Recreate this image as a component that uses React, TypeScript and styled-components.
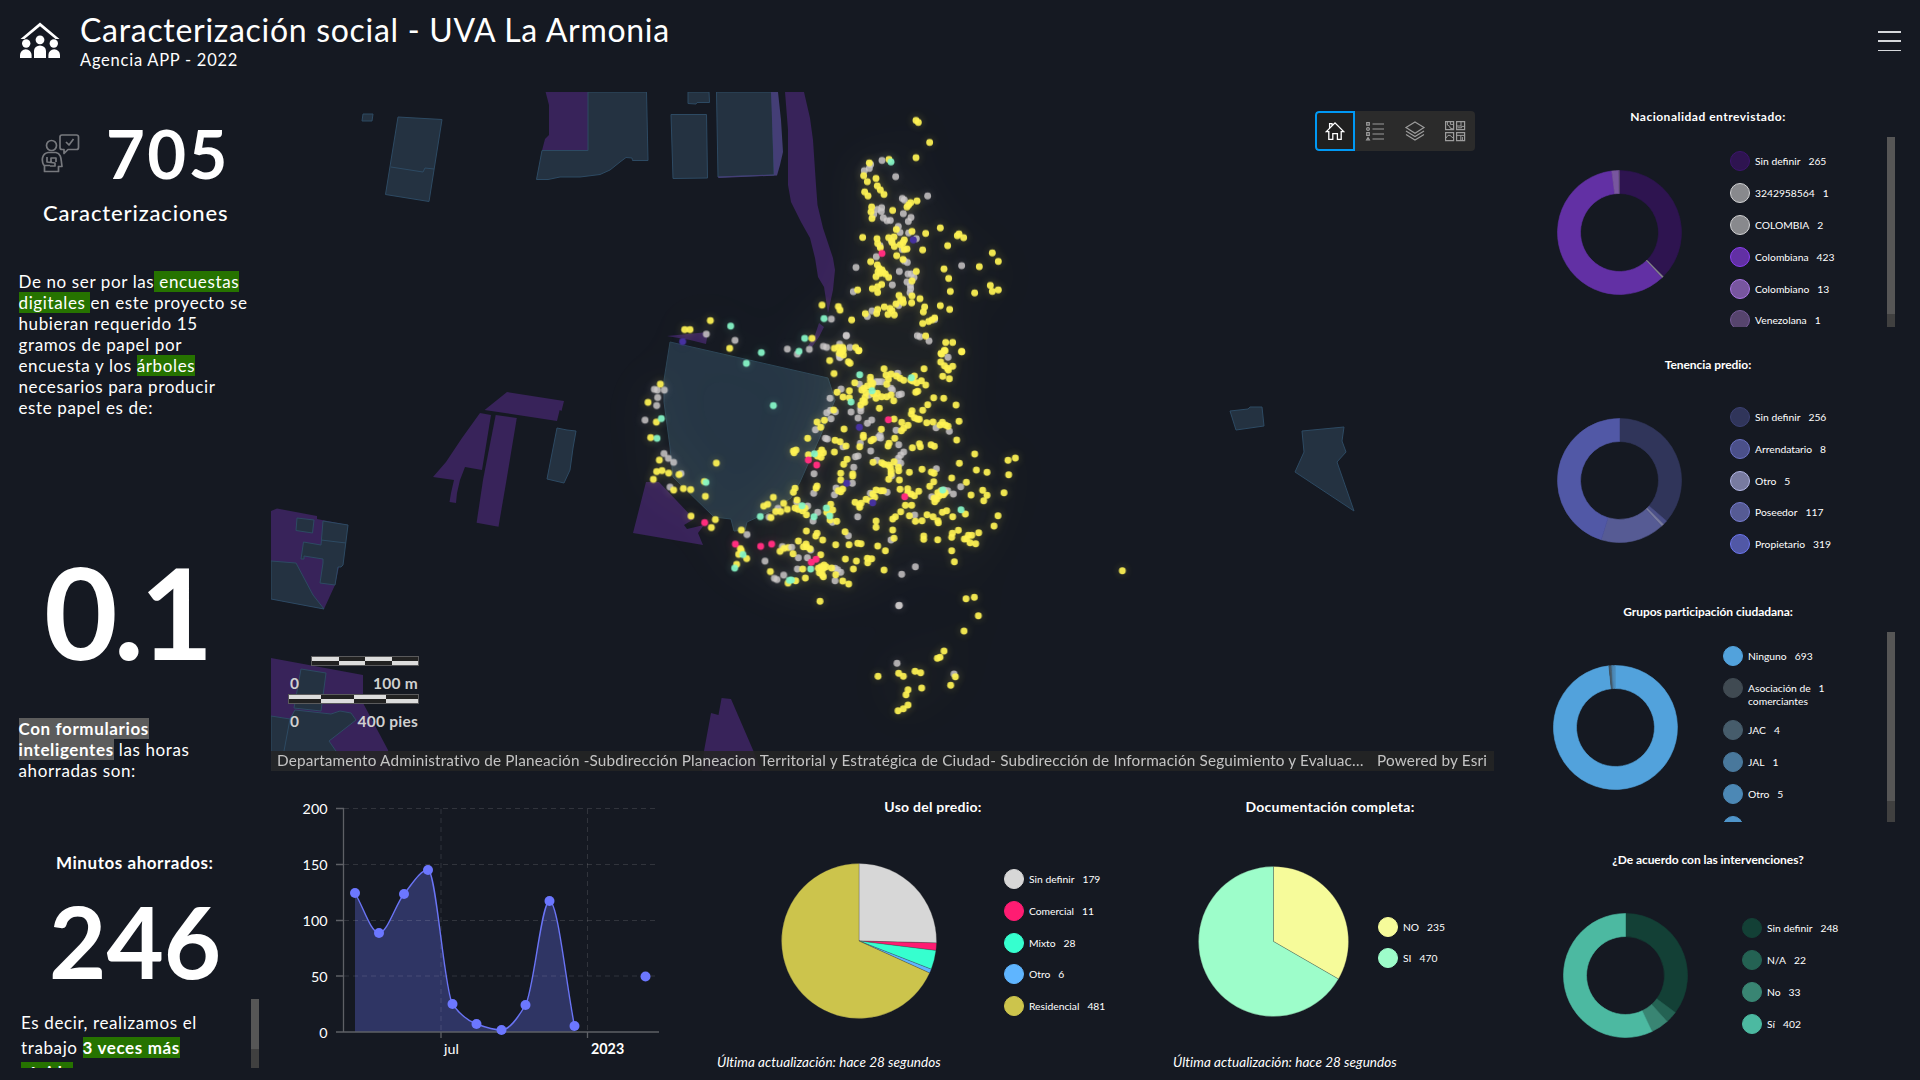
import React from "react";
import styled, { createGlobalStyle } from "styled-components";

const GlobalStyle = createGlobalStyle`
  * { box-sizing: border-box; }
  body { margin: 0; background: #151922; overflow: hidden; }
`;

const Page = styled.div`
  width: 1920px;
  height: 1080px;
  display: flex;
  flex-direction: column;
  overflow: hidden;
  background: #151922;
  color: #fff;
  font-family: Lato, "Open Sans", sans-serif;
`;

const Header = styled.header`
  height: 92px;
  flex: none;
  display: flex;
  align-items: flex-start;
  padding: 0 19px 0 20px;
`;
const HeaderIcon = styled.svg`
  margin-top: 21px;
  width: 40px;
  height: 38px;
`;
const Titles = styled.div`
  margin-left: 20px;
  flex: 1;
  padding-top: 10px;
`;
const Title = styled.h1`
  margin: 0;
  font-size: 32px;
  line-height: 40px;
  font-weight: 400;
  letter-spacing: 0.7px;
`;
const Subtitle = styled.div`
  font-size: 16.5px;
  line-height: 20px;
  letter-spacing: 0.75px;
`;
const MenuIcon = styled.div`
  margin-top: 31px;
  width: 23px;
  height: 20px;
  display: flex;
  flex-direction: column;
  justify-content: space-between;
  &::before, &::after, & > i { content: ""; height: 1.5px; background: #d6d8dc; display: block; }
`;

const Body = styled.main`
  display: flex;
  height: 988px;
`;
const LeftColumn = styled.aside`
  width: 271px;
  flex: none;
  display: flex;
  flex-direction: column;
`;
const CenterColumn = styled.section`
  width: 1223px;
  flex: none;
  display: flex;
  flex-direction: column;
`;
const RightColumn = styled.aside`
  width: 426px;
  flex: none;
  display: flex;
  flex-direction: column;
`;

const CountRow = styled.div`
  margin-top: 27px;
  height: 68px;
  display: flex;
  align-items: center;
  padding-left: 41px;
`;
const PersonIcon = styled.svg`
  width: 39px;
  height: 40px;
  margin-right: 26px;
`;
const BigNumber = styled.div<{ $size: number; $top?: number; $spacing?: number; $left?: number; $line?: number }>`
  margin-top: ${(p) => p.$top ?? 0}px;
  padding-left: ${(p) => p.$left ?? 0}px;
  font-size: ${(p) => p.$size}px;
  line-height: ${(p) => p.$line ?? p.$size}px;
  font-weight: 700;
  letter-spacing: ${(p) => p.$spacing ?? 0}px;
  white-space: nowrap;
`;
const CountLabel = styled.div`
  margin-top: 13px;
  width: 271px;
  line-height: 26px;
  font-size: 22px;
  font-weight: 500;
  padding-left: 43px;
  letter-spacing: 0.85px;
`;
const Prose = styled.p<{ $top: number; $line?: number; $left?: number }>`
  margin: ${(p) => p.$top}px 0 0;
  padding-left: ${(p) => p.$left ?? 18.5}px;
  font-size: 17px;
  line-height: ${(p) => p.$line ?? 21}px;
  letter-spacing: 0.62px;
  white-space: nowrap;
`;
const Mark = styled.mark<{ $tone: "green" | "gray" }>`
  color: inherit;
  background: ${(p) => (p.$tone === "green" ? "#267300" : "#5c5c5c")};
  font-weight: ${(p) => (p.$tone === "gray" ? 700 : "inherit")};
  padding: 0;
  display: inline-block;
  line-height: 21px;
  white-space: pre;
`;
const MinutesLabel = styled.div`
  margin-top: 72px;
  line-height: 20px;
  font-size: 17px;
  font-weight: 700;
  padding-left: 56px;
  letter-spacing: 0.55px;
  white-space: nowrap;
`;
const ScrollBox = styled.div`
  margin-top: 8px;
  height: 69px;
  display: flex;
  overflow: hidden;
`;
const ScrollText = styled.div`
  width: 251px;
`;
const ScrollTrack = styled.div<{ $height: number; $thumb: number }>`
  width: 8px;
  height: ${(p) => p.$height}px;
  background: #404040;
  &::before { content: ""; display: block; height: ${(p) => p.$thumb}px; background: #565656; }
`;

const MapFrame = styled.div`
  position: relative;
  height: 679px;
  overflow: hidden;
`;
const MapCanvas = styled.svg`
  display: block;
  width: 1223px;
  height: 679px;
`;
const Toolbar = styled.div`
  position: absolute;
  left: 1044px;
  top: 19px;
  display: flex;
  border-radius: 4px;
  overflow: hidden;
  background: #2b2b2b;
`;
const Tool = styled.button<{ $active?: boolean }>`
  width: 40px;
  height: 40px;
  padding: 0;
  display: grid;
  place-items: center;
  color: ${(p) => (p.$active ? "#fff" : "#9c9c9c")};
  background: ${(p) => (p.$active ? "#202020" : "transparent")};
  border: ${(p) => (p.$active ? "2px solid #0099f5" : "0")};
  border-radius: ${(p) => (p.$active ? "4px 0 0 4px" : "0")};
`;
const ScaleBox = styled.div`
  position: absolute;
  left: 17px;
  top: 564px;
  width: 131px;
  display: flex;
  flex-direction: column;
  align-items: flex-end;
`;
const ScaleBar = styled.div<{ $width: number }>`
  width: ${(p) => p.$width}px;
  height: 10px;
  border: 1px solid #5a5a5c;
  display: grid;
  grid-template-columns: repeat(4, 1fr);
`;
const ScaleCell = styled.div<{ $flip: boolean }>`
  background: ${(p) => (p.$flip ? "linear-gradient(#222 50%, #dcdcdc 50%)" : "linear-gradient(#dcdcdc 50%, #222 50%)")};
`;
const ScaleLabels = styled.div`
  width: 131px;
  height: 28px;
  padding: 7px 1px 0 2px;
  display: flex;
  justify-content: space-between;
  line-height: 20px;
  font-size: 15.5px;
  font-weight: 700;
  letter-spacing: 0.25px;
  color: #d0d0d0;
`;
const Attribution = styled.div`
  position: absolute;
  left: 0;
  right: 0;
  bottom: 0;
  height: 20px;
  padding: 0 7px 0 6px;
  display: flex;
  justify-content: space-between;
  background: rgba(36, 36, 36, 0.88);
  color: #c4c4c4;
  font-size: 15.3px;
  line-height: 19px;
  letter-spacing: 0.16px;
  white-space: nowrap;
`;

const BottomRow = styled.div`
  display: flex;
  height: 309px;
`;
const LineSvg = styled.svg`
  width: 434px;
  height: 309px;
  flex: none;
`;
const PiePanel = styled.section<{ $width: number }>`
  width: ${(p) => p.$width}px;
  flex: none;
  padding-top: 26px;
`;
const PanelTitle = styled.h2<{ $small?: boolean; $spacing?: number }>`
  margin: 0;
  text-align: center;
  line-height: 20px;
  font-weight: 700;
  font-size: ${(p) => (p.$small ? 12 : 14)}px;
  letter-spacing: ${(p) => p.$spacing ?? (p.$small ? -0.05 : 0.25)}px;
  white-space: nowrap;
`;
const PieSvg = styled.svg`
  flex: none;
`;
const PieRow = styled.div<{ $left: number; $gap: number }>`
  height: 236px;
  display: flex;
  align-items: center;
  gap: ${(p) => p.$gap}px;
  padding: 15px 0 0 ${(p) => p.$left}px;
  & > ${PieSvg} { margin-bottom: 3px; }
`;
const Updated = styled.div`
  padding-left: 12px;
  line-height: 19px;
  font-size: 13.5px;
  font-style: italic;
  letter-spacing: 0.05px;
`;
const DonutPanel = styled.section`
  height: 247.6px;
  flex: none;
  padding-top: 15px;
`;
const DonutTitle = styled(PanelTitle)`
  padding-left: 2px;
`;
const DonutBody = styled.div<{ $left: number; $gap: number; $top: number }>`
  margin-top: ${(p) => p.$top}px;
  height: 190px;
  overflow: hidden;
  display: flex;
  align-items: center;
  padding: 0 25px 0 ${(p) => p.$left}px;
  gap: ${(p) => p.$gap}px;
  & > ${ScrollTrack} { margin-left: auto; }
`;
const LegendList = styled.ul<{ $scroll?: boolean }>`
  list-style: none;
  margin: 0;
  padding: ${(p) => (p.$scroll ? "14px 0 0" : "0")};
  align-self: ${(p) => (p.$scroll ? "flex-start" : "center")};
  display: flex;
  flex-direction: column;
  gap: 11.9px;
`;
const LegendItem = styled.li`
  min-height: 20px;
  display: flex;
  font-size: 10.3px;
  line-height: 13px;
  white-space: pre-line;
`;
const Swatch = styled.i<{ $fill: string; $edge: string }>`
  width: 20px;
  height: 20px;
  flex: none;
  border-radius: 50%;
  background: ${(p) => p.$fill};
  border: 1px solid ${(p) => p.$edge};
`;
const LegendLabel = styled.span`
  margin: 4px 8px 0 5px;
`;
const LegendValue = styled.span`
  margin-top: 4px;
`;

type Slice = { label: string; value?: number; share?: number; fill: string; edge?: string };

function arc(cx: number, cy: number, r: number, inner: number, a0: number, a1: number) {
  const p = (rad: number, a: number) => `${(cx + rad * Math.sin(a)).toFixed(2)} ${(cy - rad * Math.cos(a)).toFixed(2)}`;
  const large = a1 - a0 > Math.PI ? 1 : 0;
  const start = inner ? `M${p(inner, a0)}L${p(r, a0)}` : `M${cx} ${cy}L${p(r, a0)}`;
  const outer = `A${r} ${r} 0 ${large} 1 ${p(r, a1)}`;
  return inner ? `${start}${outer}L${p(inner, a1)}A${inner} ${inner} 0 ${large} 0 ${p(inner, a0)}Z` : `${start}${outer}Z`;
}

const amount = (d: Slice) => d.value ?? d.share ?? 0;

function Pie({ data, r, inner = 0 }: { data: Slice[]; r: number; inner?: number }) {
  const total = data.reduce((s, d) => s + amount(d), 0);
  const size = r * 2 + 1;
  let angle = 0;
  return (
    <PieSvg width={size} height={size}>
      {data.map((d) => {
        const a0 = angle;
        angle += (amount(d) / total) * Math.PI * 2;
        return <path key={d.label} d={arc(size / 2, size / 2, r, inner, a0, angle)} fill={d.fill} stroke={inner ? d.fill : "rgba(60,60,60,.45)"} strokeWidth={0.6} />;
      })}
    </PieSvg>
  );
}

function Legend({ data, scroll }: { data: Slice[]; scroll?: boolean }) {
  return (
    <LegendList $scroll={scroll}>
      {data.map((d) => (
        <LegendItem key={d.label}>
          <Swatch $fill={d.fill} $edge={d.edge ?? d.fill} />
          <LegendLabel>{d.label}</LegendLabel>
          <LegendValue>{d.value}</LegendValue>
        </LegendItem>
      ))}
    </LegendList>
  );
}

const nationality: Slice[] = [
  { label: "Sin definir", value: 265, fill: "#2e1450", edge: "#3c156d" },
  { label: "3242958564", value: 1, fill: "#88898d", edge: "#d2d2d4" },
  { label: "COLOMBIA", value: 2, fill: "#88898d", edge: "#d2d2d4" },
  { label: "Colombiana", value: 423, fill: "#6230a4", edge: "#8a3ff0" },
  { label: "Colombiano", value: 13, fill: "#78569f", edge: "#ab76e6" },
  { label: "Venezolana", value: 1, fill: "#56446d", edge: "#765b98" },
];
const tenure: Slice[] = [
  { label: "Sin definir", value: 256, fill: "#30355a", edge: "#3c4173" },
  { label: "Arrendatario", value: 8, fill: "#4b5089", edge: "#6b72c4" },
  { label: "Otro", value: 5, fill: "#787ba0", edge: "#b3b7e6" },
  { label: "Poseedor", value: 117, fill: "#565b94", edge: "#767cd0" },
  { label: "Propietario", value: 319, fill: "#5158a6", edge: "#6c76f0" },
];
const groups: Slice[] = [
  { label: "Ninguno", value: 693, fill: "#52a2dc" },
  { label: "Asociación de\ncomerciantes", value: 1, fill: "#404a52" },
  { label: "JAC", value: 4, fill: "#465c6b" },
  { label: "JAL", value: 1, fill: "#49789c" },
  { label: "Otro", value: 5, fill: "#4c88b5" },
  { label: "", share: 1, fill: "#4f95ca" },
];
const agreement: Slice[] = [
  { label: "Sin definir", value: 248, fill: "#134036" },
  { label: "N/A", value: 22, fill: "#246253" },
  { label: "No", value: 33, fill: "#398573" },
  { label: "Sí", value: 402, fill: "#4cb9a1" },
];
const landUse: Slice[] = [
  { label: "Sin definir", value: 179, fill: "#d7d7d7" },
  { label: "Comercial", value: 11, fill: "#ff1c72" },
  { label: "Mixto", value: 28, fill: "#36ffcf" },
  { label: "Otro", value: 6, fill: "#5fb5ff" },
  { label: "Residencial", value: 481, fill: "#ccc44c" },
];
const documents: Slice[] = [
  { label: "NO", value: 235, fill: "#f6fb9a" },
  { label: "SI", value: 470, fill: "#9dfdca" },
];

function Donut({ title, data, left, gap, thumb, spacing }: { title: string; data: Slice[]; left: number; gap: number; thumb?: number; spacing?: number }) {
  return (
    <DonutPanel>
      <DonutTitle $small $spacing={spacing}>{title}</DonutTitle>
      <DonutBody $left={left} $gap={gap} $top={thumb ? 10 : 11}>
        <Pie data={data} r={62} inner={39} />
        <Legend data={data} scroll={!!thumb} />
        {thumb ? <ScrollTrack $height={190} $thumb={thumb} /> : null}
      </DonutBody>
    </DonutPanel>
  );
}

/* Survey points per map tile: tile origin in screen units, coordinates in thirds of a unit. */
type Kind = "yellow" | "gray" | "green" | "pink" | "blue";
const tiles: { x: number; y: number; points: Partial<Record<Kind, string>> }[] = [
  {
    x: 600,
    y: 300,
    points: {
      gray: "694,57 739,107 319,102 405,121 562,147 592,162 628,148 670,139 680,142 719,132 719,172 163,268 172,270 193,270 173,293 170,317 135,360 192,461 205,475 221,487 243,521 210,561 441,704 534,625 507,651 547,740 495,783 551,825 523,835 531,839",
      yellow: "666,15 715,20 720,30 331,62 254,89 270,89 389,145 636,115 181,252 144,307 169,366 152,413 178,480 170,515 186,512 206,519 237,524 160,538 349,489 313,545 221,570 250,566 272,569 316,589 273,648 346,659 334,683 424,690 421,746 416,763 424,752 440,776 410,793 520,592 491,618 503,613 551,610 527,635 542,635 562,628 513,653 540,754 565,743 552,745 511,815 564,849 703,145 715,142 722,155 730,150 689,182 702,221",
      green: "672,56 392,78 614,115 597,154 484,158 439,190 520,317 184,356 171,415 318,547 481,650 429,764 404,804 568,841",
      pink: "314,668 406,732 482,739 515,732",
      blue: "248,125",
    },
  },
  {
    x: 840,
    y: 90,
    points: {
      gray: "126,211 92,223 88,235 73,242 167,260 263,318 187,325 193,330 190,371 125,353 112,358 124,364 101,373 130,384 141,392 151,391 213,382 205,394 175,409 180,427 206,429 229,446 109,500 120,467 154,452 187,478 193,513 202,517 48,532 365,527 178,544 204,552 214,552 222,562 201,576 157,585 211,586 212,596 210,608 40,605 96,663 82,679 176,646 284,688 232,737 240,740 267,753 19,737 30,772",
      yellow: "228,91 235,97 269,157 228,203 147,208 88,219 71,257 82,275 108,265 112,288 121,300 132,313 74,306 84,318 231,333 212,338 206,345 201,351 95,351 93,366 96,385 158,361 169,418 216,424 257,430 301,414 68,442 111,446 113,460 121,473 146,443 162,441 156,457 163,469 193,450 189,458 181,464 201,477 193,478 323,467 352,437 357,432 371,443 248,480 457,489 475,514 418,530 170,497 189,508 92,515 112,525 118,535 126,540 120,550 108,560 136,552 146,562 130,548 114,545 97,596 113,590 125,583 113,607 53,600 229,544 216,573 312,537 326,565 331,604 404,609 451,586 457,604 475,600 177,616 188,628 190,638 168,642 182,632 216,618 240,626 215,639 254,651 250,666 301,647 329,658 113,658 110,670 76,671 133,651 150,655 156,662 144,673 163,675 35,690 248,700 266,694 276,690 284,684 257,738 317,757 338,757 365,784 303,790 313,781 8,772 47,772 57,781",
      green: "153,216",
      pink: "126,490",
      blue: "220,450",
    },
  },
  {
    x: 790,
    y: 350,
    points: {
      gray: "150,22 148,15 474,22 153,117 120,145 323,70 275,95 258,95 266,95 208,103 307,120 326,134 334,132 303,115 237,135 183,186 212,175 212,183 204,204 121,181 110,188 136,185 123,206 76,239 232,220 245,210 318,241 438,233 478,244 106,265 112,267 270,256 265,262 272,264 326,284 242,303 211,280 159,290 196,320 204,318 191,352 260,331 332,315 341,306 325,325 332,340 322,340 439,356 305,377 187,400 138,414 133,434 72,371 71,430 241,430 291,427 512,410 490,432 425,440 473,422 462,420 20,455 53,468 83,487 69,513 127,517 203,500 374,495 303,570 175,557 376,650 335,673 326,767 5,592 62,600 25,623 52,623 22,657 143,659 152,667 135,692 135,655",
      yellow: "148,10 160,15 155,5 175,35 180,40 205,2 515,5 465,2 455,12 452,36 463,47 475,60 488,49 472,55 458,79 478,86 282,56 402,56 288,75 303,72 319,78 330,85 341,91 194,98 241,82 241,92 248,100 232,108 222,115 215,120 245,108 295,88 290,103 362,90 373,78 368,93 380,98 394,92 407,105 377,127 383,124 141,127 178,122 159,141 178,143 228,128 250,132 262,130 258,145 225,142 218,152 224,157 212,165 275,140 290,140 303,135 311,152 268,175 431,143 461,145 498,165 413,164 398,181 366,182 364,192 373,203 382,207 388,208 410,218 429,216 450,225 457,217 466,225 474,229 507,214 500,270 131,180 103,211 81,216 92,232 312,207 335,217 354,226 334,242 341,235 274,238 162,237 220,256 220,262 243,272 250,268 53,265 10,303 18,300 12,308 135,271 150,275 168,288 209,290 133,306 314,265 297,280 294,288 367,293 388,281 391,290 423,284 433,289 95,300 100,308 82,318 93,322 88,310 55,314 171,328 161,343 249,337 275,338 282,343 508,340 554,312 676,324 654,331 656,374 559,360 591,367 358,367 396,358 424,366 432,370 325,352 326,362 312,335 295,345 301,352 303,362 303,372 296,388 328,390 152,370 152,390 188,372 188,378 431,395 485,384 419,409 529,397 578,421 642,428 591,436 581,452 543,435 330,418 353,416 386,424 373,437 363,432 353,428 346,466 365,466 81,408 78,414 15,415 10,427 158,417 145,422 152,425 258,420 272,422 280,422 248,432 254,442 228,448 241,452 195,457 208,465 213,460 209,472 443,428 453,422 465,428 460,434 447,438 432,445 434,455 440,448 21,450 33,470 45,475 15,474 24,478 37,482 49,494 122,463 128,480 110,487 119,495 120,510 140,514 332,485 358,497 411,494 429,500 457,487 470,482 488,500 443,512 445,518 396,512 376,514 316,500 308,507 526,492 624,497 612,528 258,513 258,532 308,540 312,565 49,543 81,550 77,558 98,570 25,573 165,545 401,558 401,568 443,569 505,541 487,550 485,562 535,556 545,556 523,567 530,566 566,548 540,578 557,581 485,602 493,635 263,588 286,602 282,660 137,584 177,584 203,580 213,581 166,627 199,633 190,657 232,625 245,626 233,638 48,582 40,590 50,590 60,596 9,611 92,614 38,657 46,684 17,692 102,645 93,650 85,655 100,655 108,650 95,665 97,675 100,680 88,668 125,654 137,674 158,693 176,702 90,754 528,746 553,742",
      green: "209,74 364,83 246,122 183,156 73,311 36,467 109,474 119,498 72,500 513,479 458,420 62,657 4,690",
      pink: "295,209 55,330 80,345 344,440 64,637 78,628",
      blue: "208,232 170,400 248,458",
    },
  },
  {
    x: 860,
    y: 600,
    points: {
      gray: "111,190 282,222 118,16",
      yellow: "787,-88 355,47 312,93 252,153 232,175 240,172 54,229 130,229 116,220 165,214 182,218 286,230 272,256 185,264 144,269 138,284 114,332 130,326 144,315",
    },
  },
];
const dotColor: Record<Kind, string> = {
  gray: "rgba(206,203,203,.82)",
  yellow: "rgba(255,243,84,.93)",
  green: "rgba(134,247,200,.93)",
  pink: "#ff2d7e",
  blue: "#4631a0",
};

function Dots() {
  return (
    <>
      {tiles.map((t) => (
        <g key={`${t.x}-${t.y}`} transform={`translate(${t.x} ${t.y}) scale(.33333)`}>
          {(Object.keys(t.points) as Kind[]).map((kind) => (
            <g key={kind} fill={dotColor[kind]}>
              {t.points[kind]!.split(" ").map((pt, i) => {
                const [x, y] = pt.split(",");
                return <circle key={i} cx={x} cy={y} r={10.4} />;
              })}
            </g>
          ))}
        </g>
      ))}
    </>
  );
}

const greenLots = [
  "363,114 373,114 372,121 362,121",
  "398,117 442,119.5 429,201.5 385.5,194.5",
  "588,92 646.5,92 648,160.5 632.5,160.5 632,158 626,157.5 620,162 610,170 600,174.5 580,177 560,177 548,179.5 536.5,179.5 542,150.5 588,150.5",
  "688,92 709,92 709.5,102.5 697,102.5 696,104 688,103.5",
  "671,114.5 706.5,114.5 707.5,178 673,178.5",
  "716.5,92 772,92 774,175 718,177",
  "557,428 567,430 576,431 573,448 570,470 564,483 547,479",
  "1230,411 1248,409 1250,407 1262,407 1264,426 1236,430",
  "1302,431 1344,427 1342,441 1346,452 1337,462 1354,511 1295,472 1304,452",
  "297,518 314,520 312.5,533 296,530.5",
  "323,521 348,525 343,565 341,567 338,567 335,585 320,583 323,563 323,559 304,556 304,559 301,559 303.5,542 321,545",
  "271,561 296,563 313,595 324,609 271,599",
  "301,669 326,673 321,711 294,708",
  "295,710 331,714 340,711 351,713 356,720 329,741 340,757 340,771 271,771 271,716 290,719",
];
const purpleLots = [
  "545.6,92 549,105 549,135 545,139 542,150.5 588,150.5 588,92",
  "785,92 788,130 788,185 791,202 801,222 810,238 815,258 818,277 824,287 828,313 833,290 835,270 833,258 823,228 817.5,205 816,185 813,140 810,118 804,92",
  "819,323 824,327 819,337 812,347 808,346 815,335",
  "667,336 708,332 706,344 690,340",
  "646,482 659,482 694,519 684,525 687,529 704,525 698,533 703,545 633,533",
  "507,392 564,401 561.5,411 559.7,410 557,421 484.6,410",
  "480,413 491,415 482,470 465,467 460,480 457,493 456,503 449.5,502 451,493 454,480 433,477 446,462 462,438",
  "495.7,415 516.8,418 506.5,480 498.5,526.7 476.6,522.7 483,480",
  "271,511 277,508.5 317,516 317,519 348,525 335,585 324,609 271,599",
  "271,658 363,675 363,703 388,750 392,771 271,771",
  "711,713 718.5,715 721.6,698 731,699 753,750 761,771 702,771 704,751",
];

function CityMap() {
  return (
    <MapCanvas viewBox="271 92 1223 679">
      <defs>
        <filter id="wide" x="-30%" y="-30%" width="160%" height="160%"><feGaussianBlur stdDeviation="26" /></filter>
        <filter id="near" x="-10%" y="-10%" width="120%" height="120%"><feGaussianBlur stdDeviation="4" /></filter>
      </defs>
      {purpleLots.map((p) => <polygon key={p} points={p} fill="#38235a" />)}
      {greenLots.map((p) => <polygon key={p} points={p} fill="#243241" stroke="#2d4a63" strokeWidth="1" />)}
      <polygon points="771,92 778,92 781,120 783,152 780,165 777,175.5 718.5,178 718,176.5 774,174.5" fill="#443e76" />
      <polyline points="391,167 423,172 425,168 434,169" fill="none" stroke="#2d4a63" />
      <polyline points="321,540 346,543" fill="none" stroke="#2d4a63" />
      <polyline points="290,719 284,751" fill="none" stroke="#2d4a63" />
      <polygon points="670,342 828,378 835,400 820,437 800,482 791,498 773,510 747,522 745,530 734,531 731,519 714,517 673,477 670,447 664,402 664,380" fill="#263645" stroke="#2c4557" />
      <g filter="url(#wide)" opacity=".2"><Dots /></g>
      <g filter="url(#near)" opacity=".28"><Dots /></g>
      <Dots />
    </MapCanvas>
  );
}

const HomeGlyph = () => (
  <svg width="20" height="20" viewBox="0 0 20 20" fill="none" stroke="currentColor" strokeWidth="1.3">
    <path d="M1.3 10.6 L10 1.8 L18.7 10.6 H16.2 V18.4 H12.4 V12.6 H7.8 V18.4 H3.8 V10.6 Z M4.6 7.2 V2.6 H7 V4.8" />
  </svg>
);
const ListGlyph = () => (
  <svg width="20" height="20" viewBox="0 0 20 20" fill="none" stroke="currentColor" strokeWidth="1.2">
    <path d="M7.5 3H19M7.5 8H19M7.5 13H19M7.5 18H19M1.7 1.6h2.6v2.6H1.7zM1.7 11.7h2.6v2.6H1.7z" />
    <circle cx="3" cy="8" r="1.4" />
    <path d="M3 16.6L4.4 19H1.6z" />
  </svg>
);
const LayersGlyph = () => (
  <svg width="22" height="20" viewBox="0 0 22 20" fill="none" stroke="currentColor" strokeWidth="1.2">
    <path d="M11 1L20 6.6L11 12.2L2 6.6zM2 10L11 15.6L20 10M2 13.4L11 19L20 13.4" />
  </svg>
);
const BasemapGlyph = () => (
  <svg width="22" height="22" viewBox="0 0 22 22" fill="none" stroke="currentColor" strokeWidth="1.2">
    <path d="M1.6 1.6h8v8h-8zM12.6 1.6h8v8h-8zM1.6 12.6h8v8h-8zM12.6 12.6h8v8h-8z" />
    <path d="M3.4 2v3l2.4 1.4L6 8l3.4 1M6.4 2v2.4H9M17 2v4h-4M20 6.4h-2.4v1.4h-4M2 18l2-2.6h2.4L7.6 17l2 1M13 15.4h7M16.8 15.4v5M18.4 17v3" strokeWidth="1" />
  </svg>
);

const points: [number, number][] = [
  [355, 893], [379, 933], [404, 894], [428, 870], [452.5, 1004], [476.5, 1024], [501.5, 1030], [525.5, 1005], [549.5, 901], [574.5, 1026],
];
const curve = (() => {
  const n = points.length;
  const slope = (i: number) => (points[i + 1][1] - points[i][1]) / (points[i + 1][0] - points[i][0]);
  const m = points.map((_, i) => {
    if (i === 0 || i === n - 1) return i === 0 ? slope(0) : slope(n - 2);
    const a = slope(i - 1), b = slope(i);
    return a * b <= 0 ? 0 : (2 * a * b) / (a + b);
  });
  return points.slice(1).reduce((d, [x, y], k) => {
    const [px, py] = points[k];
    const h = (x - px) / 3;
    return `${d}C${px + h} ${py + m[k] * h} ${x - h} ${y - m[k + 1] * h} ${x} ${y}`;
  }, `M${points[0][0]} ${points[0][1]}`);
})();

function LineChart() {
  return (
    <LineSvg viewBox="271 771 434 309" fontFamily="Lato, sans-serif" fontSize="14.3" fill="#fff">
      <path d={`${curve}V1032H355Z`} fill="#2f3564" />
      <g stroke="#ffffff" strokeOpacity=".12" strokeDasharray="5 4">
        {[808.5, 864.5, 920.5, 976].map((y) => <line key={y} x1="344" x2="659" y1={y} y2={y} />)}
        <line x1="441" x2="441" y1="809" y2="1032" />
        <line x1="587.5" x2="587.5" y1="809" y2="1032" />
      </g>
      <path d={curve} fill="none" stroke="#6a74f5" strokeWidth="1.4" />
      <g stroke="#5e6066" strokeWidth="1.3">
        <path d="M343.5 808V1032M336 1032H659M336 808.5h8M336 864.5h8M336 920.5h8M336 976h8M441 1032v6M587.5 1032v6" fill="none" />
      </g>
      {[...points, [645.5, 976.5]].map(([x, y]) => <circle key={x} cx={x} cy={y} r="5" fill="#6c77ff" />)}
      {[[200, 813.5], [150, 869.5], [100, 926], [50, 981.5], [0, 1037.5]].map(([v, y]) => (
        <text key={v} x="327.5" y={y} textAnchor="end">{v}</text>
      ))}
      <text x="444" y="1054">jul</text>
      <text x="591" y="1054" fontWeight="700">2023</text>
    </LineSvg>
  );
}

const Bar = ({ width }: { width: number }) => (
  <ScaleBar $width={width}>
    {[false, true, false, true].map((flip, i) => <ScaleCell key={i} $flip={flip} />)}
  </ScaleBar>
);

export default function App() {
  return (
    <Page>
      <GlobalStyle />
      <Header>
        <HeaderIcon viewBox="0 0 40 38" fill="#fff">
          <path d="M20 1.5L39.5 18H35.5L20 5.2L4.5 18H.5z" />
          <ellipse cx="6.2" cy="22.5" rx="4.2" ry="4.2" />
          <ellipse cx="33.8" cy="22.5" rx="4.2" ry="4.2" />
          <ellipse cx="20" cy="18.8" rx="4.4" ry="4.4" />
          <path d="M0 37v-3a5.8 5.8 0 0 1 11.6 0v3zM28.4 37v-3a5.8 5.8 0 0 1 11.6 0v3zM14 37V30a6 5.6 0 0 1 12 0v7z" />
        </HeaderIcon>
        <Titles>
          <Title>Caracterización social - UVA La Armonia</Title>
          <Subtitle>Agencia APP - 2022</Subtitle>
        </Titles>
        <MenuIcon><i /></MenuIcon>
      </Header>
      <Body>
        <LeftColumn>
          <CountRow>
            <PersonIcon viewBox="0 0 39 40" fill="none" stroke="#77797e" strokeWidth="1.7" strokeLinejoin="round">
              <circle cx="10.5" cy="12.5" r="5" />
              <path d="M21 2h14.500q2 0 2 2v10.500q0 2-2 2H27l-4 4v-4h-2q-2 0-2-2V4q0-2 2-2zM25 9l3 3 4.500-6" />
              <path d="M3 32.500c-3-5-2-12 4-13h8c5 1 5 6 5.500 10l.5 4h-4M3 32.500h6M3.500 33v5.500h14V33M6 24v5l8 1v3H9M10 29v-4h5v4" />
            </PersonIcon>
            <BigNumber $size={67} $spacing={2.4}>705</BigNumber>
          </CountRow>
          <CountLabel>Caracterizaciones</CountLabel>
          <Prose $top={45}>
            De no ser por las<Mark $tone="green"> encuestas</Mark><br />
            <Mark $tone="green">digitales </Mark>en este proyecto se<br />
            hubieran requerido 15<br />
            gramos de papel por<br />
            encuesta y los <Mark $tone="green">árboles</Mark><br />
            necesarios para producir<br />
            este papel es de:
          </Prose>
          <BigNumber $size={127} $line={129} $top={129} $left={44} $spacing={-4}>0.1</BigNumber>
          <Prose $top={42}>
            <Mark $tone="gray">Con formularios</Mark><br />
            <Mark $tone="gray">inteligentes</Mark> las horas<br />
            ahorradas son:
          </Prose>
          <MinutesLabel>Minutos ahorrados:</MinutesLabel>
          <BigNumber $size={99} $top={18} $line={100} $left={49}>246</BigNumber>
          <ScrollBox>
            <ScrollText>
              <Prose $top={11} $line={25} $left={21}>
                Es decir, realizamos el<br />
                trabajo <Mark $tone="green"><b>3 veces más</b></Mark><br />
                <Mark $tone="green"><b>rápido</b></Mark>
              </Prose>
            </ScrollText>
            <ScrollTrack $height={69} $thumb={50} />
          </ScrollBox>
        </LeftColumn>
        <CenterColumn>
          <MapFrame>
            <CityMap />
            <Toolbar>
              <Tool $active><HomeGlyph /></Tool>
              <Tool><ListGlyph /></Tool>
              <Tool><LayersGlyph /></Tool>
              <Tool><BasemapGlyph /></Tool>
            </Toolbar>
            <ScaleBox>
              <Bar width={108} />
              <ScaleLabels><span>0</span><span>100 m</span></ScaleLabels>
              <Bar width={131} />
              <ScaleLabels><span>0</span><span>400 pies</span></ScaleLabels>
            </ScaleBox>
            <Attribution>
              <span>Departamento Administrativo de Planeación -Subdirección Planeacion Territorial y Estratégica de Ciudad- Subdirección de Información Seguimiento y Evaluac…</span>
              <span>Powered by Esri</span>
            </Attribution>
          </MapFrame>
          <BottomRow>
            <LineChart />
            <PiePanel $width={456}>
              <PanelTitle>Uso del predio:</PanelTitle>
              <PieRow $left={76} $gap={67}>
                <Pie data={landUse} r={77.5} />
                <Legend data={landUse} />
              </PieRow>
              <Updated>Última actualización: hace 28 segundos</Updated>
            </PiePanel>
            <PiePanel $width={338}>
              <PanelTitle>Documentación completa:</PanelTitle>
              <PieRow $left={37} $gap={29}>
                <Pie data={documents} r={75} />
                <Legend data={documents} />
              </PieRow>
              <Updated>Última actualización: hace 28 segundos</Updated>
            </PiePanel>
          </BottomRow>
        </CenterColumn>
        <RightColumn>
          <Donut title="Nacionalidad entrevistado:" data={nationality} left={62.5} gap={48.5} thumb={177} spacing={0.5} />
          <Donut title="Tenencia predio:" data={tenure} left={62.5} gap={48.5} />
          <Donut title="Grupos participación ciudadana:" data={groups} left={59} gap={45} thumb={169} />
          <Donut title="¿De acuerdo con las intervenciones?" data={agreement} left={69} gap={54} />
        </RightColumn>
      </Body>
    </Page>
  );
}
